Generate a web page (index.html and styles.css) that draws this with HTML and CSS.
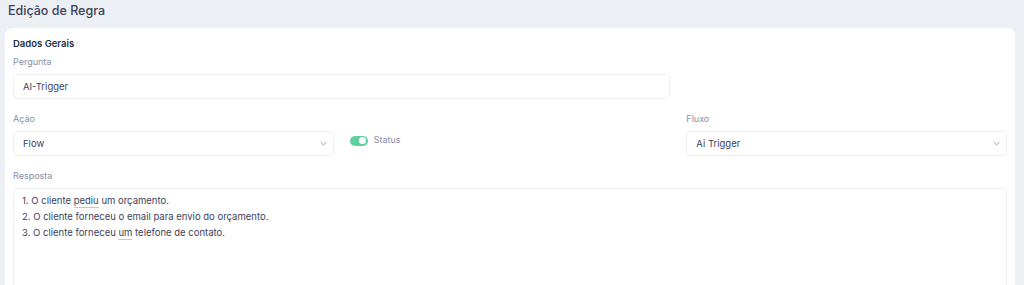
FILE: index.html
```html
<!DOCTYPE html>
<html lang="pt">
<head>
<meta charset="utf-8">
<link rel="stylesheet" href="styles.css">
</head>
<body>
<div class="page">
  <h1 class="title">Edição de Regra</h1>
  <div class="card">
    <h2 class="section">Dados Gerais</h2>
    <div class="grid">
      <div class="field span2">
        <label class="label">Pergunta</label>
        <div class="input">AI-Trigger</div>
      </div>
      <div class="field empty"></div>
      <div class="field">
        <label class="label">Ação</label>
        <div class="input select">Flow<svg class="chev" viewBox="0 0 10 6" width="7" height="5"><path d="M1 1l4 4 4-4" fill="none" stroke="#888ea8" stroke-width="1.3"/></svg></div>
      </div>
      <div class="field toggle-field">
        <span class="toggle"><span class="knob"></span></span>
        <span class="status">Status</span>
      </div>
      <div class="field">
        <label class="label">Fluxo</label>
        <div class="input select">Ai Trigger<svg class="chev" viewBox="0 0 10 6" width="7" height="5"><path d="M1 1l4 4 4-4" fill="none" stroke="#888ea8" stroke-width="1.3"/></svg></div>
      </div>
      <div class="field span3">
        <label class="label">Resposta</label>
        <div class="textarea">
          <div>1. O cliente <span class="sp">pediu</span> um orçamento.</div>
          <div>2. O cliente forneceu o email para envio do orçamento.</div>
          <div>3. O cliente forneceu <span class="sp">um</span> telefone de contato.</div>
        </div>
      </div>
    </div>
  </div>
</div>
</body>
</html>
```
FILE: styles.css
```css
* { box-sizing: border-box; }
html, body { margin: 0; padding: 0; }
html { height: 285px; overflow: hidden; }
body {
  background: #eceff4;
  font-family: Inter, "Noto Sans", sans-serif;
  color: #3b3f5c;
  height: 285px;
  overflow: hidden;
}
.page { padding: 0 9px 0 5px; }
.title {
  margin: 0;
  padding: 3px 0 0 3px;
  height: 28px;
  font-size: 12.5px;
  font-weight: 500;
  color: #3b3f5c;
  line-height: 16px;
}
.card {
  background: #fff;
  border-radius: 7px 7px 0 0;
  padding: 9px 8px 0 8px;
  height: 257px;
  overflow: hidden;
}
.section {
  margin: 0;
  font-size: 9.5px;
  font-weight: 600;
  color: #1b2e4b;
  line-height: 14px;
}
.grid {
  display: grid;
  grid-template-columns: repeat(3, 1fr);
  column-gap: 16px;
  row-gap: 14px;
  margin-top: 5px;
}
.span2 { grid-column: span 2; }
.span3 { grid-column: span 3; }
.label {
  display: block;
  font-size: 9px;
  color: #888ea8;
  line-height: 12px;
  margin-bottom: 6px;
}
.input {
  height: 25px;
  border: 1px solid #eef0f4;
  border-radius: 4px;
  padding: 0 9px;
  font-size: 9.5px;
  color: #3b3f5c;
  display: flex;
  align-items: center;
  line-height: 1;
}
.select { justify-content: space-between; }
.chev { margin-right: -3px; }
.toggle-field {
  display: flex;
  align-items: center;
  align-self: start;
  padding: 18px 0 0 0;
  height: 41px;
  gap: 6px;
}
.toggle {
  width: 18px;
  height: 10px;
  border-radius: 5px;
  background: #5fd1a1;
  position: relative;
  margin-top: -4px;
}
.knob {
  position: absolute;
  right: 1.5px;
  top: 1.5px;
  width: 7px;
  height: 7px;
  border-radius: 50%;
  background: #fff;
}
.status {
  font-size: 9px;
  color: #888ea8;
  margin-top: -6px;
}
.textarea {
  border: 1px solid #eef0f4;
  border-radius: 4px;
  height: 120px;
  padding: 4px 8px;
  font-size: 9.5px;
  color: #3b3f5c;
  line-height: 16px;
}
.sp {
  padding-bottom: 2px;
  background: linear-gradient(#f5c842, #f5c842) no-repeat left bottom / 100% 1px;
}
```
